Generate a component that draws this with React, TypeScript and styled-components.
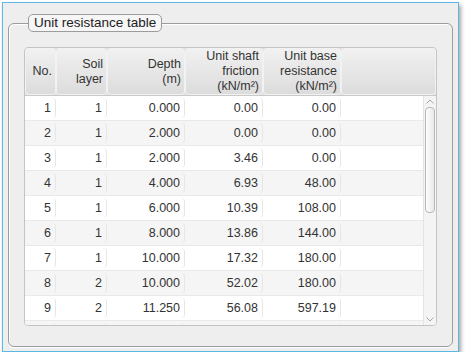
import React from "react";
import styled, { createGlobalStyle } from "styled-components";

const Global = createGlobalStyle`
  html, body { margin: 0; padding: 0; background: #ffffff; }
  body { font-family: "Liberation Sans", Arial, sans-serif; }
`;

const Window = styled.div`
  margin: 2px 0 0 2px;
  width: 457px;
  height: 350px;
  border: 1px solid #5cb8e2;
  background: #eeeeee;
  box-shadow: 2px 3px 4px rgba(0, 0, 0, 0.35);
  padding: 11px 5px 4px 5px;
  box-sizing: border-box;
  display: flex;
  flex-direction: column;
`;

const Group = styled.fieldset`
  margin: 0;
  flex: 1;
  border: 1px solid #9c9c9c;
  border-radius: 6px;
  padding: 15px 15px 20px 15px;
  min-width: 0;
  min-height: 0;
  display: flex;
  flex-direction: column;
  box-shadow: inset 1px 1px 0 #ffffff, 0 1px 0 #ffffff;
`;

const Legend = styled.legend`
  margin-left: 4px;
  padding: 0 5px;
  height: 18px;
  line-height: 16px;
  font-size: 13.5px;
  color: #222;
  border: 1px solid #9c9c9c;
  border-radius: 5px;
  background: #f6f6f6;
  box-sizing: border-box;
`;

const Table = styled.div`
  flex: 1;
  min-height: 0;
  border: 1px solid #c4c4c4;
  border-radius: 4px;
  background: #ffffff;
  overflow: hidden;
  display: flex;
  flex-direction: column;
`;

const cols = "31px 51px 78px 78px 78px 1fr";

const HeaderRow = styled.div`
  display: grid;
  grid-template-columns: ${cols};
  height: 47px;
  flex: none;
  border-bottom: 1px solid #c9c9c9;
  background: #e2e2e2;
`;

const HeadCell = styled.div`
  box-sizing: border-box;
  border: 1px solid #f2f2f2;
  border-radius: 4px;
  background: linear-gradient(#f1f1f1, #dcdcdc);
  display: flex;
  align-items: center;
  justify-content: flex-end;
  text-align: right;
  padding: 0 3px 0 2px;
  font-size: 12.5px;
  line-height: 15px;
  color: #333;
`;

const Body = styled.div`
  flex: 1;
  display: flex;
  min-height: 0;
`;

const Rows = styled.div`
  flex: 1;
  overflow: hidden;
`;

const Row = styled.div<{ $alt: boolean }>`
  display: grid;
  grid-template-columns: ${cols};
  height: 25px;
  box-sizing: border-box;
  border-bottom: 1px solid #e9e9e9;
  background: ${(p) => (p.$alt ? "#f5f5f5" : "#ffffff")};
`;

const Cell = styled.div<{ $last?: boolean }>`
  box-sizing: border-box;
  display: flex;
  align-items: center;
  justify-content: flex-end;
  padding-right: 4px;
  font-size: 12.5px;
  color: #333;
  margin: 2px 0;
  border-right: ${(p) => (p.$last ? "none" : "1px solid #e6e6e6")};
  border-radius: 0 4px 4px 0;
`;

const Scrollbar = styled.div`
  width: 12px;
  background: #f4f4f4;
  border-left: 1px solid #e4e4e4;
  display: flex;
  flex-direction: column;
  align-items: center;
`;

const Arrow = styled.div`
  height: 11px;
  width: 12px;
  display: flex;
  align-items: center;
  justify-content: center;
`;

const Thumb = styled.div`
  width: 10px;
  height: 106px;
  box-sizing: border-box;
  border: 1px solid #b9b9b9;
  border-radius: 4px;
  background: linear-gradient(90deg, #fdfdfd, #e9e9e9);
`;

const Spacer = styled.div`
  flex: 1;
`;

const data = [
  ["1", "1", "0.000", "0.00", "0.00"],
  ["2", "1", "2.000", "0.00", "0.00"],
  ["3", "1", "2.000", "3.46", "0.00"],
  ["4", "1", "4.000", "6.93", "48.00"],
  ["5", "1", "6.000", "10.39", "108.00"],
  ["6", "1", "8.000", "13.86", "144.00"],
  ["7", "1", "10.000", "17.32", "180.00"],
  ["8", "2", "10.000", "52.02", "180.00"],
  ["9", "2", "11.250", "56.08", "597.19"],
  ["", "", "", "", ""],
];

const Chevron = ({ up }: { up: boolean }) => (
  <svg width="8" height="5" viewBox="0 0 8 5">
    <path
      d={up ? "M0.5 4.5 L4 1 L7.5 4.5" : "M0.5 0.5 L4 4 L7.5 0.5"}
      fill="none"
      stroke="#a8a8a8"
      strokeWidth="1"
    />
  </svg>
);

export default function App() {
  return (
    <>
      <Global />
      <Window>
        <Group>
          <Legend>Unit resistance table</Legend>
          <Table>
            <HeaderRow>
              <HeadCell>No.</HeadCell>
              <HeadCell>
                Soil
                <br />
                layer
              </HeadCell>
              <HeadCell>
                Depth
                <br />
                (m)
              </HeadCell>
              <HeadCell>
                Unit shaft
                <br />
                friction
                <br />
                (kN/m²)
              </HeadCell>
              <HeadCell>
                Unit base
                <br />
                resistance
                <br />
                (kN/m²)
              </HeadCell>
              <HeadCell />
            </HeaderRow>
            <Body>
              <Rows>
                {data.map((r, i) => (
                  <Row key={i} $alt={i % 2 === 1}>
                    {r.map((v, j) => (
                      <Cell key={j}>{v}</Cell>
                    ))}
                    <Cell $last />
                  </Row>
                ))}
              </Rows>
              <Scrollbar>
                <Arrow>
                  <Chevron up />
                </Arrow>
                <Thumb />
                <Spacer />
                <Arrow>
                  <Chevron up={false} />
                </Arrow>
              </Scrollbar>
            </Body>
          </Table>
        </Group>
      </Window>
    </>
  );
}
